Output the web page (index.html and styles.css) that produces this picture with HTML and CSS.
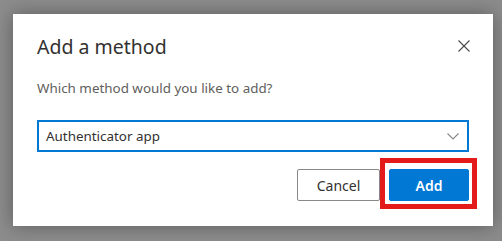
FILE: index.html
```html
<!DOCTYPE html>
<html lang="en">
<head>
<meta charset="utf-8">
<title>Add a method</title>
<link rel="stylesheet" href="styles.css">
</head>
<body>
<div class="dialog">
  <div class="header">
    <h1 class="title">Add a method</h1>
    <button class="close" aria-label="Close">
      <svg width="12" height="12" viewBox="0 0 12 12"><path d="M0.5 0.5L11.5 11.5M11.5 0.5L0.5 11.5" stroke="#4a4a4a" stroke-width="1.1" fill="none"/></svg>
    </button>
  </div>
  <p class="question">Which method would you like to add?</p>
  <div class="select">
    <span class="select-value">Authenticator app</span>
    <svg class="chevron" width="12" height="7" viewBox="0 0 12 7"><path d="M0.5 0.5L6 6L11.5 0.5" stroke="#8a8886" stroke-width="1.1" fill="none"/></svg>
  </div>
  <div class="actions">
    <button class="btn btn-secondary">Cancel</button>
    <div class="highlight-wrap">
      <button class="btn btn-primary">Add</button>
      <span class="highlight"></span>
    </div>
  </div>
</div>
</body>
</html>
```
FILE: styles.css
```css
html, body {
  margin: 0;
  padding: 0;
}
body {
  width: 502px;
  height: 241px;
  overflow: hidden;
  background: #8c8c8c;
  font-family: "Segoe UI", "Noto Sans", "Open Sans", sans-serif;
}
.dialog {
  box-sizing: border-box;
  margin: 14px 0 0 13px;
  width: 480px;
  height: 212px;
  background: #fff;
  box-shadow: 0 0 18px rgba(0, 0, 0, 0.35);
  padding: 0 24px;
  position: relative;
}
.header {
  display: flex;
  justify-content: space-between;
  align-items: center;
  height: 64px;
}
.title {
  margin: 0;
  font-size: 19.5px;
  font-weight: 400;
  color: #323130;
}
.close {
  border: 0;
  background: none;
  padding: 0;
  width: 12px;
  height: 12px;
  margin-right: -1px;
  display: flex;
}
.question {
  margin: 0;
  font-size: 13.4px;
  color: #605e5c;
  line-height: 20px;
}
.select {
  box-sizing: border-box;
  margin-top: 22px;
  height: 32px;
  border: 2px solid #0078d4;
  display: flex;
  align-items: center;
  justify-content: space-between;
  padding: 0 8px 0 7px;
}
.select-value {
  font-size: 13.4px;
  color: #323130;
}
.actions {
  display: flex;
  justify-content: flex-end;
  margin-top: 17px;
  gap: 9px;
}
.btn {
  box-sizing: border-box;
  height: 32px;
  font-family: inherit;
  font-size: 14px;
  border-radius: 2px;
  padding: 0 16px;
}
.btn-secondary {
  width: 83px;
  background: #fff;
  border: 1px solid #8a8886;
  color: #323130;
}
.btn-primary {
  width: 80px;
  background: #0078d4;
  border: 1px solid #0078d4;
  color: #fff;
  font-weight: 600;
}
.highlight-wrap {
  position: relative;
  display: flex;
}
.highlight {
  position: absolute;
  left: -9px;
  top: -11px;
  right: -8px;
  bottom: -8px;
  border: 5px solid #e31b1b;
}
```
